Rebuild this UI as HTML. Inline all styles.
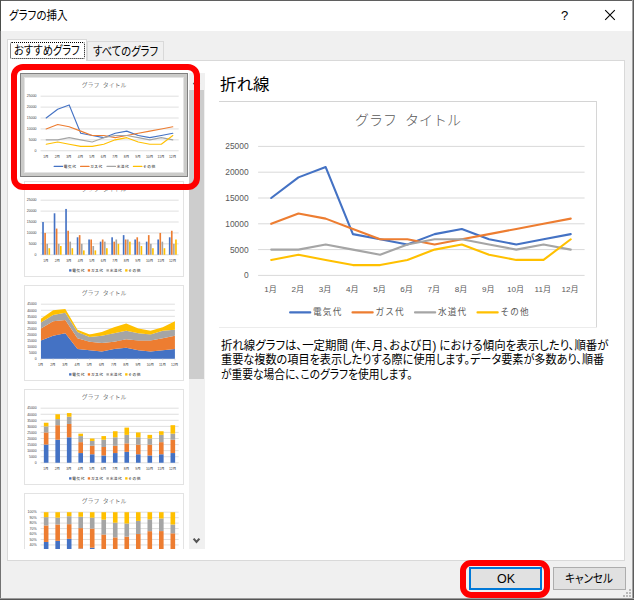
<!DOCTYPE html>
<html lang="ja">
<head>
<meta charset="utf-8">
<title>グラフの挿入</title>
<style>
html,body{margin:0;padding:0;}
body{width:634px;height:600px;overflow:hidden;background:#f0f0f0;position:relative;
 font-family:"Liberation Sans","Noto Sans CJK JP",sans-serif;font-size:12px;color:#000;}
.abs{position:absolute;}
.t{position:absolute;white-space:nowrap;transform-origin:0 0;line-height:1;font-family:"Liberation Sans","Noto Sans CJK JP",sans-serif;font-feature-settings:"palt";}
.ch{position:absolute;display:block;}
#titlebar{left:0;top:0;width:634px;height:31px;background:#fff;}
#bt{left:0;top:0;width:634px;height:1px;background:#5f5f5f;}
#bl{left:0;top:0;width:1px;height:600px;background:linear-gradient(#4a4d4a 0,#4a4d4a 31px,#727272 31px,#727272 100%);}
#br{left:632px;top:0;width:1px;height:600px;background:#5c5c5c;border-left:1px solid #a2a2a2;}
#bb{left:0;top:599px;width:634px;height:1px;background:#555;border-top:1px solid #9a9a9a;margin-top:-1px;}
#panel{left:7px;top:60px;width:616px;height:499px;background:#fff;border:1px solid #d9d9d9;}
#tab1{left:7px;top:39px;width:80px;height:22px;background:#fff;border:1px solid #d9d9d9;border-bottom:none;box-sizing:border-box;}
#tab1f{left:10px;top:42px;width:75px;height:17px;border:1px dotted #000;box-sizing:border-box;border-radius:2px;}
#tab2{left:87px;top:41px;width:77px;height:19px;background:#f0f0f0;border:1px solid #d9d9d9;border-bottom:none;box-sizing:border-box;}
#list{left:20px;top:73px;width:185px;height:476px;overflow:hidden;background:#fff;}
.th{position:absolute;left:4px;width:158px;height:94px;border:1px solid #e3e3e3;background:#fff;overflow:hidden;}
.th svg{left:-1px;top:-1px;}
#sel{left:0;top:0;width:168px;height:104px;box-sizing:border-box;border:1px solid #808080;background:#cbcbc9;}
#sb{left:169px;top:0;width:16px;height:476px;background:#f0f0f0;}
#sbt{left:169px;top:17px;width:15px;height:289px;background:#cdcdcd;}
#sep{left:219px;top:101px;width:378px;height:1px;background:#e1e1e1;}
.btn{position:absolute;box-sizing:border-box;background:#e1e1e1;}
#ok{left:469px;top:567px;width:73px;height:23px;border:2px solid #0078d7;}
#cancel{left:553px;top:567px;width:73px;height:23px;border:1px solid #adadad;}
.red{position:absolute;box-sizing:border-box;border:6px solid #ff0000;}
#red1{left:11px;top:64px;width:189px;height:126px;border-radius:12px;}
#red2{left:460px;top:560px;width:90px;height:38px;border-radius:11px;}
</style>
</head>
<body>
<div class="abs" id="titlebar"></div>
<div class="t" id="ttl" style="transform:scaleX(0.875);left:9px;top:10px;font-size:12px;">グラフの挿入</div>
<div class="t" id="help" style="left:561px;top:9px;font-size:13px;font-family:'Liberation Sans',sans-serif;">?</div>
<svg class="ch" style="left:604px;top:9px" width="12" height="12" viewBox="0 0 12 12"><path d="M1.2 1.2 L10.8 10.8 M10.8 1.2 L1.2 10.8" stroke="#000" stroke-width="1.1" fill="none"/></svg>
<div class="abs" id="tab2"></div>
<div class="abs" id="panel"></div>
<div class="abs" id="tab1"></div>
<div class="abs" id="tab1f"></div>
<div class="t" id="tab1t" style="transform:scaleX(0.86);left:14px;top:45px;font-size:12px;">おすすめグラフ</div>
<div class="t" id="tab2t" style="transform:scaleX(0.86);left:93px;top:46px;font-size:12px;">すべてのグラフ</div>

<div class="abs" id="list">
<div class="abs" id="sel"></div>
<div class="th" style="top:4px">
<svg class="ch" style="left:-1px;top:-1px" width="160" height="96" viewBox="0 0 378 227" font-family='Liberation Sans, Noto Sans CJK JP, sans-serif' >
<rect x="0" y="0" width="378" height="227" fill="#fff"/>
<text x="189" y="24.3" font-size="14" font-weight="300" word-spacing="4" text-anchor="middle" fill="#2e2e2e">グラフ タイトル</text>
<line x1="39.1" x2="365.6" y1="174.4" y2="174.4" stroke="#D9D9D9" stroke-width="2.0"/>
<text x="29.6" y="177.4" font-size="8.4" font-weight="500" text-anchor="end" fill="#3c3c3c">0</text>
<line x1="39.1" x2="365.6" y1="148.6" y2="148.6" stroke="#D9D9D9" stroke-width="2.0"/>
<text x="29.6" y="151.6" font-size="8.4" font-weight="500" text-anchor="end" fill="#3c3c3c">5000</text>
<line x1="39.1" x2="365.6" y1="122.8" y2="122.8" stroke="#D9D9D9" stroke-width="2.0"/>
<text x="29.6" y="125.8" font-size="8.4" font-weight="500" text-anchor="end" fill="#3c3c3c">10000</text>
<line x1="39.1" x2="365.6" y1="97" y2="97" stroke="#D9D9D9" stroke-width="2.0"/>
<text x="29.6" y="100" font-size="8.4" font-weight="500" text-anchor="end" fill="#3c3c3c">15000</text>
<line x1="39.1" x2="365.6" y1="71.2" y2="71.2" stroke="#D9D9D9" stroke-width="2.0"/>
<text x="29.6" y="74.2" font-size="8.4" font-weight="500" text-anchor="end" fill="#3c3c3c">20000</text>
<line x1="39.1" x2="365.6" y1="45.4" y2="45.4" stroke="#D9D9D9" stroke-width="2.0"/>
<text x="29.6" y="48.4" font-size="8.4" font-weight="500" text-anchor="end" fill="#3c3c3c">25000</text>
<text x="51.52" y="191.2" font-size="8.1" font-weight="500" text-anchor="middle" fill="#3c3c3c">1月</text>
<text x="78.74" y="191.2" font-size="8.1" font-weight="500" text-anchor="middle" fill="#3c3c3c">2月</text>
<text x="105.98" y="191.2" font-size="8.1" font-weight="500" text-anchor="middle" fill="#3c3c3c">3月</text>
<text x="133.21" y="191.2" font-size="8.1" font-weight="500" text-anchor="middle" fill="#3c3c3c">4月</text>
<text x="160.44" y="191.2" font-size="8.1" font-weight="500" text-anchor="middle" fill="#3c3c3c">5月</text>
<text x="187.67" y="191.2" font-size="8.1" font-weight="500" text-anchor="middle" fill="#3c3c3c">6月</text>
<text x="214.9" y="191.2" font-size="8.1" font-weight="500" text-anchor="middle" fill="#3c3c3c">7月</text>
<text x="242.12" y="191.2" font-size="8.1" font-weight="500" text-anchor="middle" fill="#3c3c3c">8月</text>
<text x="269.36" y="191.2" font-size="8.1" font-weight="500" text-anchor="middle" fill="#3c3c3c">9月</text>
<text x="296.59" y="191.2" font-size="8.1" font-weight="500" text-anchor="middle" fill="#3c3c3c">10月</text>
<text x="323.82" y="191.2" font-size="8.1" font-weight="500" text-anchor="middle" fill="#3c3c3c">11月</text>
<text x="351.05" y="191.2" font-size="8.1" font-weight="500" text-anchor="middle" fill="#3c3c3c">12月</text>
<polyline points="52.22,97 79.44,76.36 106.68,66.04 133.91,133.12 161.13,138.28 188.37,143.44 215.59,133.12 242.82,127.96 270.06,138.28 297.29,143.44 324.52,138.28 351.75,133.12" fill="none" stroke="#4472C4" stroke-width="2.6" stroke-linejoin="round" stroke-linecap="round"/>
<polyline points="52.22,122.8 79.44,112.48 106.68,117.64 133.91,127.96 161.13,138.28 188.37,138.28 215.59,143.44 242.82,138.28 270.06,133.12 297.29,127.96 324.52,122.8 351.75,117.64" fill="none" stroke="#ED7D31" stroke-width="2.6" stroke-linejoin="round" stroke-linecap="round"/>
<polyline points="52.22,148.6 79.44,148.6 106.68,143.44 133.91,148.6 161.13,153.76 188.37,143.44 215.59,138.28 242.82,138.28 270.06,143.44 297.29,148.6 324.52,143.44 351.75,148.6" fill="none" stroke="#A5A5A5" stroke-width="2.6" stroke-linejoin="round" stroke-linecap="round"/>
<polyline points="52.22,158.92 79.44,153.76 106.68,158.92 133.91,164.08 161.13,164.08 188.37,158.92 215.59,148.6 242.82,143.44 270.06,153.76 297.29,158.92 324.52,158.92 351.75,138.28" fill="none" stroke="#FFC000" stroke-width="2.6" stroke-linejoin="round" stroke-linecap="round"/>
<line x1="71.1" x2="91.3" y1="211.4" y2="211.4" stroke="#4472C4" stroke-width="2.6" stroke-linecap="round"/>
<text x="94.0" y="214.4" font-size="8.6" letter-spacing="1.25" font-weight="500" fill="#3c3c3c">電気代</text>
<line x1="133.5" x2="153.7" y1="211.4" y2="211.4" stroke="#ED7D31" stroke-width="2.6" stroke-linecap="round"/>
<text x="156.4" y="214.4" font-size="8.6" letter-spacing="1.25" font-weight="500" fill="#3c3c3c">ガス代</text>
<line x1="196" x2="216.2" y1="211.4" y2="211.4" stroke="#A5A5A5" stroke-width="2.6" stroke-linecap="round"/>
<text x="218.9" y="214.4" font-size="8.6" letter-spacing="1.25" font-weight="500" fill="#3c3c3c">水道代</text>
<line x1="258.5" x2="278.7" y1="211.4" y2="211.4" stroke="#FFC000" stroke-width="2.6" stroke-linecap="round"/>
<text x="281.4" y="214.4" font-size="8.6" letter-spacing="1.25" font-weight="500" fill="#3c3c3c">その他</text>
</svg>
</div>
<div class="th" style="top:108px">
<svg class="ch" style="left:-1px;top:-1px" width="160" height="96" viewBox="0 0 378 227" font-family='Liberation Sans, Noto Sans CJK JP, sans-serif' >
<rect x="0" y="0" width="378" height="227" fill="#fff"/>
<text x="189" y="24.3" font-size="14" font-weight="300" word-spacing="4" text-anchor="middle" fill="#2e2e2e">グラフ タイトル</text>
<line x1="39.1" x2="365.6" y1="174.4" y2="174.4" stroke="#D9D9D9" stroke-width="2.0"/>
<text x="29.6" y="177.4" font-size="8.4" font-weight="500" text-anchor="end" fill="#3c3c3c">0</text>
<line x1="39.1" x2="365.6" y1="148.6" y2="148.6" stroke="#D9D9D9" stroke-width="2.0"/>
<text x="29.6" y="151.6" font-size="8.4" font-weight="500" text-anchor="end" fill="#3c3c3c">5000</text>
<line x1="39.1" x2="365.6" y1="122.8" y2="122.8" stroke="#D9D9D9" stroke-width="2.0"/>
<text x="29.6" y="125.8" font-size="8.4" font-weight="500" text-anchor="end" fill="#3c3c3c">10000</text>
<line x1="39.1" x2="365.6" y1="97" y2="97" stroke="#D9D9D9" stroke-width="2.0"/>
<text x="29.6" y="100" font-size="8.4" font-weight="500" text-anchor="end" fill="#3c3c3c">15000</text>
<line x1="39.1" x2="365.6" y1="71.2" y2="71.2" stroke="#D9D9D9" stroke-width="2.0"/>
<text x="29.6" y="74.2" font-size="8.4" font-weight="500" text-anchor="end" fill="#3c3c3c">20000</text>
<line x1="39.1" x2="365.6" y1="45.4" y2="45.4" stroke="#D9D9D9" stroke-width="2.0"/>
<text x="29.6" y="48.4" font-size="8.4" font-weight="500" text-anchor="end" fill="#3c3c3c">25000</text>
<text x="51.52" y="191.2" font-size="8.1" font-weight="500" text-anchor="middle" fill="#3c3c3c">1月</text>
<text x="78.74" y="191.2" font-size="8.1" font-weight="500" text-anchor="middle" fill="#3c3c3c">2月</text>
<text x="105.98" y="191.2" font-size="8.1" font-weight="500" text-anchor="middle" fill="#3c3c3c">3月</text>
<text x="133.21" y="191.2" font-size="8.1" font-weight="500" text-anchor="middle" fill="#3c3c3c">4月</text>
<text x="160.44" y="191.2" font-size="8.1" font-weight="500" text-anchor="middle" fill="#3c3c3c">5月</text>
<text x="187.67" y="191.2" font-size="8.1" font-weight="500" text-anchor="middle" fill="#3c3c3c">6月</text>
<text x="214.9" y="191.2" font-size="8.1" font-weight="500" text-anchor="middle" fill="#3c3c3c">7月</text>
<text x="242.12" y="191.2" font-size="8.1" font-weight="500" text-anchor="middle" fill="#3c3c3c">8月</text>
<text x="269.36" y="191.2" font-size="8.1" font-weight="500" text-anchor="middle" fill="#3c3c3c">9月</text>
<text x="296.59" y="191.2" font-size="8.1" font-weight="500" text-anchor="middle" fill="#3c3c3c">10月</text>
<text x="323.82" y="191.2" font-size="8.1" font-weight="500" text-anchor="middle" fill="#3c3c3c">11月</text>
<text x="351.05" y="191.2" font-size="8.1" font-weight="500" text-anchor="middle" fill="#3c3c3c">12月</text>
<rect x="42.86" y="97" width="3.89" height="77.4" fill="#4472C4"/>
<rect x="47.8" y="122.8" width="3.89" height="51.6" fill="#ED7D31"/>
<rect x="52.74" y="148.6" width="3.89" height="25.8" fill="#A5A5A5"/>
<rect x="57.68" y="158.92" width="3.89" height="15.48" fill="#FFC000"/>
<rect x="70.09" y="76.36" width="3.89" height="98.04" fill="#4472C4"/>
<rect x="75.03" y="112.48" width="3.89" height="61.92" fill="#ED7D31"/>
<rect x="79.97" y="148.6" width="3.89" height="25.8" fill="#A5A5A5"/>
<rect x="84.91" y="153.76" width="3.89" height="20.64" fill="#FFC000"/>
<rect x="97.32" y="66.04" width="3.89" height="108.36" fill="#4472C4"/>
<rect x="102.26" y="117.64" width="3.89" height="56.76" fill="#ED7D31"/>
<rect x="107.2" y="143.44" width="3.89" height="30.96" fill="#A5A5A5"/>
<rect x="112.14" y="158.92" width="3.89" height="15.48" fill="#FFC000"/>
<rect x="124.55" y="133.12" width="3.89" height="41.28" fill="#4472C4"/>
<rect x="129.49" y="127.96" width="3.89" height="46.44" fill="#ED7D31"/>
<rect x="134.43" y="148.6" width="3.89" height="25.8" fill="#A5A5A5"/>
<rect x="139.37" y="164.08" width="3.89" height="10.32" fill="#FFC000"/>
<rect x="151.78" y="138.28" width="3.89" height="36.12" fill="#4472C4"/>
<rect x="156.72" y="138.28" width="3.89" height="36.12" fill="#ED7D31"/>
<rect x="161.66" y="153.76" width="3.89" height="20.64" fill="#A5A5A5"/>
<rect x="166.6" y="164.08" width="3.89" height="10.32" fill="#FFC000"/>
<rect x="179.01" y="143.44" width="3.89" height="30.96" fill="#4472C4"/>
<rect x="183.95" y="138.28" width="3.89" height="36.12" fill="#ED7D31"/>
<rect x="188.89" y="143.44" width="3.89" height="30.96" fill="#A5A5A5"/>
<rect x="193.83" y="158.92" width="3.89" height="15.48" fill="#FFC000"/>
<rect x="206.24" y="133.12" width="3.89" height="41.28" fill="#4472C4"/>
<rect x="211.18" y="143.44" width="3.89" height="30.96" fill="#ED7D31"/>
<rect x="216.12" y="138.28" width="3.89" height="36.12" fill="#A5A5A5"/>
<rect x="221.06" y="148.6" width="3.89" height="25.8" fill="#FFC000"/>
<rect x="233.47" y="127.96" width="3.89" height="46.44" fill="#4472C4"/>
<rect x="238.41" y="138.28" width="3.89" height="36.12" fill="#ED7D31"/>
<rect x="243.35" y="138.28" width="3.89" height="36.12" fill="#A5A5A5"/>
<rect x="248.29" y="143.44" width="3.89" height="30.96" fill="#FFC000"/>
<rect x="260.7" y="138.28" width="3.89" height="36.12" fill="#4472C4"/>
<rect x="265.64" y="133.12" width="3.89" height="41.28" fill="#ED7D31"/>
<rect x="270.58" y="143.44" width="3.89" height="30.96" fill="#A5A5A5"/>
<rect x="275.52" y="153.76" width="3.89" height="20.64" fill="#FFC000"/>
<rect x="287.93" y="143.44" width="3.89" height="30.96" fill="#4472C4"/>
<rect x="292.87" y="127.96" width="3.89" height="46.44" fill="#ED7D31"/>
<rect x="297.81" y="148.6" width="3.89" height="25.8" fill="#A5A5A5"/>
<rect x="302.75" y="158.92" width="3.89" height="15.48" fill="#FFC000"/>
<rect x="315.16" y="138.28" width="3.89" height="36.12" fill="#4472C4"/>
<rect x="320.1" y="122.8" width="3.89" height="51.6" fill="#ED7D31"/>
<rect x="325.04" y="143.44" width="3.89" height="30.96" fill="#A5A5A5"/>
<rect x="329.98" y="158.92" width="3.89" height="15.48" fill="#FFC000"/>
<rect x="342.39" y="133.12" width="3.89" height="41.28" fill="#4472C4"/>
<rect x="347.33" y="117.64" width="3.89" height="56.76" fill="#ED7D31"/>
<rect x="352.27" y="148.6" width="3.89" height="25.8" fill="#A5A5A5"/>
<rect x="357.21" y="138.28" width="3.89" height="36.12" fill="#FFC000"/>
<rect x="106.5" y="208.6" width="5.6" height="5.6" fill="#4472C4"/>
<text x="114.1" y="214.4" font-size="8.6" letter-spacing="1.25" font-weight="500" fill="#3c3c3c">電気代</text>
<rect x="150.6" y="208.6" width="5.6" height="5.6" fill="#ED7D31"/>
<text x="158.2" y="214.4" font-size="8.6" letter-spacing="1.25" font-weight="500" fill="#3c3c3c">ガス代</text>
<rect x="194.8" y="208.6" width="5.6" height="5.6" fill="#A5A5A5"/>
<text x="202.4" y="214.4" font-size="8.6" letter-spacing="1.25" font-weight="500" fill="#3c3c3c">水道代</text>
<rect x="239" y="208.6" width="5.6" height="5.6" fill="#FFC000"/>
<text x="246.6" y="214.4" font-size="8.6" letter-spacing="1.25" font-weight="500" fill="#3c3c3c">その他</text>
</svg>
</div>
<div class="th" style="top:212px">
<svg class="ch" style="left:-1px;top:-1px" width="160" height="96" viewBox="0 0 378 227" font-family='Liberation Sans, Noto Sans CJK JP, sans-serif' >
<rect x="0" y="0" width="378" height="227" fill="#fff"/>
<text x="189" y="24.3" font-size="14" font-weight="300" word-spacing="4" text-anchor="middle" fill="#2e2e2e">グラフ タイトル</text>
<line x1="39.9" x2="356.7" y1="174.4" y2="174.4" stroke="#D9D9D9" stroke-width="2.0"/>
<text x="29.6" y="177.4" font-size="8.0" font-weight="500" text-anchor="end" fill="#3c3c3c">0</text>
<line x1="39.9" x2="356.7" y1="160.07" y2="160.07" stroke="#D9D9D9" stroke-width="2.0"/>
<text x="29.6" y="163.07" font-size="8.0" font-weight="500" text-anchor="end" fill="#3c3c3c">5000</text>
<line x1="39.9" x2="356.7" y1="145.73" y2="145.73" stroke="#D9D9D9" stroke-width="2.0"/>
<text x="29.6" y="148.73" font-size="8.0" font-weight="500" text-anchor="end" fill="#3c3c3c">10000</text>
<line x1="39.9" x2="356.7" y1="131.4" y2="131.4" stroke="#D9D9D9" stroke-width="2.0"/>
<text x="29.6" y="134.4" font-size="8.0" font-weight="500" text-anchor="end" fill="#3c3c3c">15000</text>
<line x1="39.9" x2="356.7" y1="117.07" y2="117.07" stroke="#D9D9D9" stroke-width="2.0"/>
<text x="29.6" y="120.07" font-size="8.0" font-weight="500" text-anchor="end" fill="#3c3c3c">20000</text>
<line x1="39.9" x2="356.7" y1="102.73" y2="102.73" stroke="#D9D9D9" stroke-width="2.0"/>
<text x="29.6" y="105.73" font-size="8.0" font-weight="500" text-anchor="end" fill="#3c3c3c">25000</text>
<line x1="39.9" x2="356.7" y1="88.4" y2="88.4" stroke="#D9D9D9" stroke-width="2.0"/>
<text x="29.6" y="91.4" font-size="8.0" font-weight="500" text-anchor="end" fill="#3c3c3c">30000</text>
<line x1="39.9" x2="356.7" y1="74.07" y2="74.07" stroke="#D9D9D9" stroke-width="2.0"/>
<text x="29.6" y="77.07" font-size="8.0" font-weight="500" text-anchor="end" fill="#3c3c3c">35000</text>
<line x1="39.9" x2="356.7" y1="59.73" y2="59.73" stroke="#D9D9D9" stroke-width="2.0"/>
<text x="29.6" y="62.73" font-size="8.0" font-weight="500" text-anchor="end" fill="#3c3c3c">40000</text>
<line x1="39.9" x2="356.7" y1="45.4" y2="45.4" stroke="#D9D9D9" stroke-width="2.0"/>
<text x="29.6" y="48.4" font-size="8.0" font-weight="500" text-anchor="end" fill="#3c3c3c">45000</text>
<text x="39.2" y="191.2" font-size="8.1" font-weight="500" text-anchor="middle" fill="#3c3c3c">1月</text>
<text x="68" y="191.2" font-size="8.1" font-weight="500" text-anchor="middle" fill="#3c3c3c">2月</text>
<text x="96.8" y="191.2" font-size="8.1" font-weight="500" text-anchor="middle" fill="#3c3c3c">3月</text>
<text x="125.6" y="191.2" font-size="8.1" font-weight="500" text-anchor="middle" fill="#3c3c3c">4月</text>
<text x="154.4" y="191.2" font-size="8.1" font-weight="500" text-anchor="middle" fill="#3c3c3c">5月</text>
<text x="183.2" y="191.2" font-size="8.1" font-weight="500" text-anchor="middle" fill="#3c3c3c">6月</text>
<text x="212" y="191.2" font-size="8.1" font-weight="500" text-anchor="middle" fill="#3c3c3c">7月</text>
<text x="240.8" y="191.2" font-size="8.1" font-weight="500" text-anchor="middle" fill="#3c3c3c">8月</text>
<text x="269.6" y="191.2" font-size="8.1" font-weight="500" text-anchor="middle" fill="#3c3c3c">9月</text>
<text x="298.4" y="191.2" font-size="8.1" font-weight="500" text-anchor="middle" fill="#3c3c3c">10月</text>
<text x="327.2" y="191.2" font-size="8.1" font-weight="500" text-anchor="middle" fill="#3c3c3c">11月</text>
<text x="356" y="191.2" font-size="8.1" font-weight="500" text-anchor="middle" fill="#3c3c3c">12月</text>
<polygon points="39.9,131.4 68.7,119.93 97.5,114.2 126.3,151.47 155.1,154.33 183.9,157.2 212.7,151.47 241.5,148.6 270.3,154.33 299.1,157.2 327.9,154.33 356.7,151.47 356.7,174.4 327.9,174.4 299.1,174.4 270.3,174.4 241.5,174.4 212.7,174.4 183.9,174.4 155.1,174.4 126.3,174.4 97.5,174.4 68.7,174.4 39.9,174.4" fill="#4472C4"/>
<polygon points="39.9,102.73 68.7,85.53 97.5,82.67 126.3,125.67 155.1,134.27 183.9,137.13 212.7,134.27 241.5,128.53 270.3,131.4 299.1,131.4 327.9,125.67 356.7,119.93 356.7,151.47 327.9,154.33 299.1,157.2 270.3,154.33 241.5,148.6 212.7,151.47 183.9,157.2 155.1,154.33 126.3,151.47 97.5,114.2 68.7,119.93 39.9,131.4" fill="#ED7D31"/>
<polygon points="39.9,88.4 68.7,71.2 97.5,65.47 126.3,111.33 155.1,122.8 183.9,119.93 212.7,114.2 241.5,108.47 270.3,114.2 299.1,117.07 327.9,108.47 356.7,105.6 356.7,119.93 327.9,125.67 299.1,131.4 270.3,131.4 241.5,128.53 212.7,134.27 183.9,137.13 155.1,134.27 126.3,125.67 97.5,82.67 68.7,85.53 39.9,102.73" fill="#A5A5A5"/>
<polygon points="39.9,79.8 68.7,59.73 97.5,56.87 126.3,105.6 155.1,117.07 183.9,111.33 212.7,99.87 241.5,91.27 270.3,102.73 299.1,108.47 327.9,99.87 356.7,85.53 356.7,105.6 327.9,108.47 299.1,117.07 270.3,114.2 241.5,108.47 212.7,114.2 183.9,119.93 155.1,122.8 126.3,111.33 97.5,65.47 68.7,71.2 39.9,88.4" fill="#FFC000"/>
<line x1="39.9" x2="39.9" y1="174.4" y2="177.9" stroke="#D9D9D9" stroke-width="2.0"/>
<line x1="68.7" x2="68.7" y1="174.4" y2="177.9" stroke="#D9D9D9" stroke-width="2.0"/>
<line x1="97.5" x2="97.5" y1="174.4" y2="177.9" stroke="#D9D9D9" stroke-width="2.0"/>
<line x1="126.3" x2="126.3" y1="174.4" y2="177.9" stroke="#D9D9D9" stroke-width="2.0"/>
<line x1="155.1" x2="155.1" y1="174.4" y2="177.9" stroke="#D9D9D9" stroke-width="2.0"/>
<line x1="183.9" x2="183.9" y1="174.4" y2="177.9" stroke="#D9D9D9" stroke-width="2.0"/>
<line x1="212.7" x2="212.7" y1="174.4" y2="177.9" stroke="#D9D9D9" stroke-width="2.0"/>
<line x1="241.5" x2="241.5" y1="174.4" y2="177.9" stroke="#D9D9D9" stroke-width="2.0"/>
<line x1="270.3" x2="270.3" y1="174.4" y2="177.9" stroke="#D9D9D9" stroke-width="2.0"/>
<line x1="299.1" x2="299.1" y1="174.4" y2="177.9" stroke="#D9D9D9" stroke-width="2.0"/>
<line x1="327.9" x2="327.9" y1="174.4" y2="177.9" stroke="#D9D9D9" stroke-width="2.0"/>
<line x1="356.7" x2="356.7" y1="174.4" y2="177.9" stroke="#D9D9D9" stroke-width="2.0"/>
<rect x="106.5" y="208.6" width="5.6" height="5.6" fill="#4472C4"/>
<text x="114.1" y="214.4" font-size="8.6" letter-spacing="1.25" font-weight="500" fill="#3c3c3c">電気代</text>
<rect x="150.6" y="208.6" width="5.6" height="5.6" fill="#ED7D31"/>
<text x="158.2" y="214.4" font-size="8.6" letter-spacing="1.25" font-weight="500" fill="#3c3c3c">ガス代</text>
<rect x="194.8" y="208.6" width="5.6" height="5.6" fill="#A5A5A5"/>
<text x="202.4" y="214.4" font-size="8.6" letter-spacing="1.25" font-weight="500" fill="#3c3c3c">水道代</text>
<rect x="239" y="208.6" width="5.6" height="5.6" fill="#FFC000"/>
<text x="246.6" y="214.4" font-size="8.6" letter-spacing="1.25" font-weight="500" fill="#3c3c3c">その他</text>
</svg>
</div>
<div class="th" style="top:316px">
<svg class="ch" style="left:-1px;top:-1px" width="160" height="96" viewBox="0 0 378 227" font-family='Liberation Sans, Noto Sans CJK JP, sans-serif' >
<rect x="0" y="0" width="378" height="227" fill="#fff"/>
<text x="189" y="24.3" font-size="14" font-weight="300" word-spacing="4" text-anchor="middle" fill="#2e2e2e">グラフ タイトル</text>
<line x1="39.1" x2="365.6" y1="174.4" y2="174.4" stroke="#D9D9D9" stroke-width="2.0"/>
<text x="29.6" y="177.4" font-size="8.0" font-weight="500" text-anchor="end" fill="#3c3c3c">0</text>
<line x1="39.1" x2="365.6" y1="160.07" y2="160.07" stroke="#D9D9D9" stroke-width="2.0"/>
<text x="29.6" y="163.07" font-size="8.0" font-weight="500" text-anchor="end" fill="#3c3c3c">5000</text>
<line x1="39.1" x2="365.6" y1="145.73" y2="145.73" stroke="#D9D9D9" stroke-width="2.0"/>
<text x="29.6" y="148.73" font-size="8.0" font-weight="500" text-anchor="end" fill="#3c3c3c">10000</text>
<line x1="39.1" x2="365.6" y1="131.4" y2="131.4" stroke="#D9D9D9" stroke-width="2.0"/>
<text x="29.6" y="134.4" font-size="8.0" font-weight="500" text-anchor="end" fill="#3c3c3c">15000</text>
<line x1="39.1" x2="365.6" y1="117.07" y2="117.07" stroke="#D9D9D9" stroke-width="2.0"/>
<text x="29.6" y="120.07" font-size="8.0" font-weight="500" text-anchor="end" fill="#3c3c3c">20000</text>
<line x1="39.1" x2="365.6" y1="102.73" y2="102.73" stroke="#D9D9D9" stroke-width="2.0"/>
<text x="29.6" y="105.73" font-size="8.0" font-weight="500" text-anchor="end" fill="#3c3c3c">25000</text>
<line x1="39.1" x2="365.6" y1="88.4" y2="88.4" stroke="#D9D9D9" stroke-width="2.0"/>
<text x="29.6" y="91.4" font-size="8.0" font-weight="500" text-anchor="end" fill="#3c3c3c">30000</text>
<line x1="39.1" x2="365.6" y1="74.07" y2="74.07" stroke="#D9D9D9" stroke-width="2.0"/>
<text x="29.6" y="77.07" font-size="8.0" font-weight="500" text-anchor="end" fill="#3c3c3c">35000</text>
<line x1="39.1" x2="365.6" y1="59.73" y2="59.73" stroke="#D9D9D9" stroke-width="2.0"/>
<text x="29.6" y="62.73" font-size="8.0" font-weight="500" text-anchor="end" fill="#3c3c3c">40000</text>
<line x1="39.1" x2="365.6" y1="45.4" y2="45.4" stroke="#D9D9D9" stroke-width="2.0"/>
<text x="29.6" y="48.4" font-size="8.0" font-weight="500" text-anchor="end" fill="#3c3c3c">45000</text>
<text x="51.52" y="191.2" font-size="8.1" font-weight="500" text-anchor="middle" fill="#3c3c3c">1月</text>
<text x="78.74" y="191.2" font-size="8.1" font-weight="500" text-anchor="middle" fill="#3c3c3c">2月</text>
<text x="105.98" y="191.2" font-size="8.1" font-weight="500" text-anchor="middle" fill="#3c3c3c">3月</text>
<text x="133.21" y="191.2" font-size="8.1" font-weight="500" text-anchor="middle" fill="#3c3c3c">4月</text>
<text x="160.44" y="191.2" font-size="8.1" font-weight="500" text-anchor="middle" fill="#3c3c3c">5月</text>
<text x="187.67" y="191.2" font-size="8.1" font-weight="500" text-anchor="middle" fill="#3c3c3c">6月</text>
<text x="214.9" y="191.2" font-size="8.1" font-weight="500" text-anchor="middle" fill="#3c3c3c">7月</text>
<text x="242.12" y="191.2" font-size="8.1" font-weight="500" text-anchor="middle" fill="#3c3c3c">8月</text>
<text x="269.36" y="191.2" font-size="8.1" font-weight="500" text-anchor="middle" fill="#3c3c3c">9月</text>
<text x="296.59" y="191.2" font-size="8.1" font-weight="500" text-anchor="middle" fill="#3c3c3c">10月</text>
<text x="323.82" y="191.2" font-size="8.1" font-weight="500" text-anchor="middle" fill="#3c3c3c">11月</text>
<text x="351.05" y="191.2" font-size="8.1" font-weight="500" text-anchor="middle" fill="#3c3c3c">12月</text>
<rect x="46.77" y="131.4" width="10.89" height="43" fill="#4472C4"/>
<rect x="46.77" y="102.73" width="10.89" height="28.67" fill="#ED7D31"/>
<rect x="46.77" y="88.4" width="10.89" height="14.33" fill="#A5A5A5"/>
<rect x="46.77" y="79.8" width="10.89" height="8.6" fill="#FFC000"/>
<rect x="74" y="119.93" width="10.89" height="54.47" fill="#4472C4"/>
<rect x="74" y="85.53" width="10.89" height="34.4" fill="#ED7D31"/>
<rect x="74" y="71.2" width="10.89" height="14.33" fill="#A5A5A5"/>
<rect x="74" y="59.73" width="10.89" height="11.47" fill="#FFC000"/>
<rect x="101.23" y="114.2" width="10.89" height="60.2" fill="#4472C4"/>
<rect x="101.23" y="82.67" width="10.89" height="31.53" fill="#ED7D31"/>
<rect x="101.23" y="65.47" width="10.89" height="17.2" fill="#A5A5A5"/>
<rect x="101.23" y="56.87" width="10.89" height="8.6" fill="#FFC000"/>
<rect x="128.46" y="151.47" width="10.89" height="22.93" fill="#4472C4"/>
<rect x="128.46" y="125.67" width="10.89" height="25.8" fill="#ED7D31"/>
<rect x="128.46" y="111.33" width="10.89" height="14.33" fill="#A5A5A5"/>
<rect x="128.46" y="105.6" width="10.89" height="5.73" fill="#FFC000"/>
<rect x="155.69" y="154.33" width="10.89" height="20.07" fill="#4472C4"/>
<rect x="155.69" y="134.27" width="10.89" height="20.07" fill="#ED7D31"/>
<rect x="155.69" y="122.8" width="10.89" height="11.47" fill="#A5A5A5"/>
<rect x="155.69" y="117.07" width="10.89" height="5.73" fill="#FFC000"/>
<rect x="182.92" y="157.2" width="10.89" height="17.2" fill="#4472C4"/>
<rect x="182.92" y="137.13" width="10.89" height="20.07" fill="#ED7D31"/>
<rect x="182.92" y="119.93" width="10.89" height="17.2" fill="#A5A5A5"/>
<rect x="182.92" y="111.33" width="10.89" height="8.6" fill="#FFC000"/>
<rect x="210.15" y="151.47" width="10.89" height="22.93" fill="#4472C4"/>
<rect x="210.15" y="134.27" width="10.89" height="17.2" fill="#ED7D31"/>
<rect x="210.15" y="114.2" width="10.89" height="20.07" fill="#A5A5A5"/>
<rect x="210.15" y="99.87" width="10.89" height="14.33" fill="#FFC000"/>
<rect x="237.38" y="148.6" width="10.89" height="25.8" fill="#4472C4"/>
<rect x="237.38" y="128.53" width="10.89" height="20.07" fill="#ED7D31"/>
<rect x="237.38" y="108.47" width="10.89" height="20.07" fill="#A5A5A5"/>
<rect x="237.38" y="91.27" width="10.89" height="17.2" fill="#FFC000"/>
<rect x="264.61" y="154.33" width="10.89" height="20.07" fill="#4472C4"/>
<rect x="264.61" y="131.4" width="10.89" height="22.93" fill="#ED7D31"/>
<rect x="264.61" y="114.2" width="10.89" height="17.2" fill="#A5A5A5"/>
<rect x="264.61" y="102.73" width="10.89" height="11.47" fill="#FFC000"/>
<rect x="291.84" y="157.2" width="10.89" height="17.2" fill="#4472C4"/>
<rect x="291.84" y="131.4" width="10.89" height="25.8" fill="#ED7D31"/>
<rect x="291.84" y="117.07" width="10.89" height="14.33" fill="#A5A5A5"/>
<rect x="291.84" y="108.47" width="10.89" height="8.6" fill="#FFC000"/>
<rect x="319.07" y="154.33" width="10.89" height="20.07" fill="#4472C4"/>
<rect x="319.07" y="125.67" width="10.89" height="28.67" fill="#ED7D31"/>
<rect x="319.07" y="108.47" width="10.89" height="17.2" fill="#A5A5A5"/>
<rect x="319.07" y="99.87" width="10.89" height="8.6" fill="#FFC000"/>
<rect x="346.3" y="151.47" width="10.89" height="22.93" fill="#4472C4"/>
<rect x="346.3" y="119.93" width="10.89" height="31.53" fill="#ED7D31"/>
<rect x="346.3" y="105.6" width="10.89" height="14.33" fill="#A5A5A5"/>
<rect x="346.3" y="85.53" width="10.89" height="20.07" fill="#FFC000"/>
<rect x="106.5" y="208.6" width="5.6" height="5.6" fill="#4472C4"/>
<text x="114.1" y="214.4" font-size="8.6" letter-spacing="1.25" font-weight="500" fill="#3c3c3c">電気代</text>
<rect x="150.6" y="208.6" width="5.6" height="5.6" fill="#ED7D31"/>
<text x="158.2" y="214.4" font-size="8.6" letter-spacing="1.25" font-weight="500" fill="#3c3c3c">ガス代</text>
<rect x="194.8" y="208.6" width="5.6" height="5.6" fill="#A5A5A5"/>
<text x="202.4" y="214.4" font-size="8.6" letter-spacing="1.25" font-weight="500" fill="#3c3c3c">水道代</text>
<rect x="239" y="208.6" width="5.6" height="5.6" fill="#FFC000"/>
<text x="246.6" y="214.4" font-size="8.6" letter-spacing="1.25" font-weight="500" fill="#3c3c3c">その他</text>
</svg>
</div>
<div class="th" style="top:420px">
<svg class="ch" style="left:-1px;top:-1px" width="160" height="96" viewBox="0 0 378 227" font-family='Liberation Sans, Noto Sans CJK JP, sans-serif' >
<rect x="0" y="0" width="378" height="227" fill="#fff"/>
<text x="189" y="24.3" font-size="14" font-weight="300" word-spacing="4" text-anchor="middle" fill="#2e2e2e">グラフ タイトル</text>
<line x1="39.1" x2="365.6" y1="174.4" y2="174.4" stroke="#D9D9D9" stroke-width="2.0"/>
<text x="29.6" y="177.4" font-size="8.4" font-weight="500" text-anchor="end" fill="#3c3c3c">0%</text>
<line x1="39.1" x2="365.6" y1="161.5" y2="161.5" stroke="#D9D9D9" stroke-width="2.0"/>
<text x="29.6" y="164.5" font-size="8.4" font-weight="500" text-anchor="end" fill="#3c3c3c">10%</text>
<line x1="39.1" x2="365.6" y1="148.6" y2="148.6" stroke="#D9D9D9" stroke-width="2.0"/>
<text x="29.6" y="151.6" font-size="8.4" font-weight="500" text-anchor="end" fill="#3c3c3c">20%</text>
<line x1="39.1" x2="365.6" y1="135.7" y2="135.7" stroke="#D9D9D9" stroke-width="2.0"/>
<text x="29.6" y="138.7" font-size="8.4" font-weight="500" text-anchor="end" fill="#3c3c3c">30%</text>
<line x1="39.1" x2="365.6" y1="122.8" y2="122.8" stroke="#D9D9D9" stroke-width="2.0"/>
<text x="29.6" y="125.8" font-size="8.4" font-weight="500" text-anchor="end" fill="#3c3c3c">40%</text>
<line x1="39.1" x2="365.6" y1="109.9" y2="109.9" stroke="#D9D9D9" stroke-width="2.0"/>
<text x="29.6" y="112.9" font-size="8.4" font-weight="500" text-anchor="end" fill="#3c3c3c">50%</text>
<line x1="39.1" x2="365.6" y1="97" y2="97" stroke="#D9D9D9" stroke-width="2.0"/>
<text x="29.6" y="100" font-size="8.4" font-weight="500" text-anchor="end" fill="#3c3c3c">60%</text>
<line x1="39.1" x2="365.6" y1="84.1" y2="84.1" stroke="#D9D9D9" stroke-width="2.0"/>
<text x="29.6" y="87.1" font-size="8.4" font-weight="500" text-anchor="end" fill="#3c3c3c">70%</text>
<line x1="39.1" x2="365.6" y1="71.2" y2="71.2" stroke="#D9D9D9" stroke-width="2.0"/>
<text x="29.6" y="74.2" font-size="8.4" font-weight="500" text-anchor="end" fill="#3c3c3c">80%</text>
<line x1="39.1" x2="365.6" y1="58.3" y2="58.3" stroke="#D9D9D9" stroke-width="2.0"/>
<text x="29.6" y="61.3" font-size="8.4" font-weight="500" text-anchor="end" fill="#3c3c3c">90%</text>
<line x1="39.1" x2="365.6" y1="45.4" y2="45.4" stroke="#D9D9D9" stroke-width="2.0"/>
<text x="29.6" y="48.4" font-size="8.4" font-weight="500" text-anchor="end" fill="#3c3c3c">100%</text>
<text x="51.52" y="191.2" font-size="8.1" font-weight="500" text-anchor="middle" fill="#3c3c3c">1月</text>
<text x="78.74" y="191.2" font-size="8.1" font-weight="500" text-anchor="middle" fill="#3c3c3c">2月</text>
<text x="105.98" y="191.2" font-size="8.1" font-weight="500" text-anchor="middle" fill="#3c3c3c">3月</text>
<text x="133.21" y="191.2" font-size="8.1" font-weight="500" text-anchor="middle" fill="#3c3c3c">4月</text>
<text x="160.44" y="191.2" font-size="8.1" font-weight="500" text-anchor="middle" fill="#3c3c3c">5月</text>
<text x="187.67" y="191.2" font-size="8.1" font-weight="500" text-anchor="middle" fill="#3c3c3c">6月</text>
<text x="214.9" y="191.2" font-size="8.1" font-weight="500" text-anchor="middle" fill="#3c3c3c">7月</text>
<text x="242.12" y="191.2" font-size="8.1" font-weight="500" text-anchor="middle" fill="#3c3c3c">8月</text>
<text x="269.36" y="191.2" font-size="8.1" font-weight="500" text-anchor="middle" fill="#3c3c3c">9月</text>
<text x="296.59" y="191.2" font-size="8.1" font-weight="500" text-anchor="middle" fill="#3c3c3c">10月</text>
<text x="323.82" y="191.2" font-size="8.1" font-weight="500" text-anchor="middle" fill="#3c3c3c">11月</text>
<text x="351.05" y="191.2" font-size="8.1" font-weight="500" text-anchor="middle" fill="#3c3c3c">12月</text>
<rect x="46.77" y="115.76" width="10.89" height="58.64" fill="#4472C4"/>
<rect x="46.77" y="76.67" width="10.89" height="39.09" fill="#ED7D31"/>
<rect x="46.77" y="57.13" width="10.89" height="19.55" fill="#A5A5A5"/>
<rect x="46.77" y="45.4" width="10.89" height="11.73" fill="#FFC000"/>
<rect x="74" y="113.12" width="10.89" height="61.28" fill="#4472C4"/>
<rect x="74" y="74.43" width="10.89" height="38.7" fill="#ED7D31"/>
<rect x="74" y="58.3" width="10.89" height="16.12" fill="#A5A5A5"/>
<rect x="74" y="45.4" width="10.89" height="12.9" fill="#FFC000"/>
<rect x="101.23" y="108.33" width="10.89" height="66.07" fill="#4472C4"/>
<rect x="101.23" y="73.72" width="10.89" height="34.61" fill="#ED7D31"/>
<rect x="101.23" y="54.84" width="10.89" height="18.88" fill="#A5A5A5"/>
<rect x="101.23" y="45.4" width="10.89" height="9.44" fill="#FFC000"/>
<rect x="128.46" y="131.4" width="10.89" height="43" fill="#4472C4"/>
<rect x="128.46" y="83.02" width="10.89" height="48.38" fill="#ED7D31"/>
<rect x="128.46" y="56.15" width="10.89" height="26.87" fill="#A5A5A5"/>
<rect x="128.46" y="45.4" width="10.89" height="10.75" fill="#FFC000"/>
<rect x="155.69" y="129.25" width="10.89" height="45.15" fill="#4472C4"/>
<rect x="155.69" y="84.1" width="10.89" height="45.15" fill="#ED7D31"/>
<rect x="155.69" y="58.3" width="10.89" height="25.8" fill="#A5A5A5"/>
<rect x="155.69" y="45.4" width="10.89" height="12.9" fill="#FFC000"/>
<rect x="182.92" y="139.22" width="10.89" height="35.18" fill="#4472C4"/>
<rect x="182.92" y="98.17" width="10.89" height="41.05" fill="#ED7D31"/>
<rect x="182.92" y="62.99" width="10.89" height="35.18" fill="#A5A5A5"/>
<rect x="182.92" y="45.4" width="10.89" height="17.59" fill="#FFC000"/>
<rect x="210.15" y="134.71" width="10.89" height="39.69" fill="#4472C4"/>
<rect x="210.15" y="104.94" width="10.89" height="29.77" fill="#ED7D31"/>
<rect x="210.15" y="70.21" width="10.89" height="34.73" fill="#A5A5A5"/>
<rect x="210.15" y="45.4" width="10.89" height="24.81" fill="#FFC000"/>
<rect x="237.38" y="134.37" width="10.89" height="40.03" fill="#4472C4"/>
<rect x="237.38" y="103.23" width="10.89" height="31.14" fill="#ED7D31"/>
<rect x="237.38" y="72.09" width="10.89" height="31.14" fill="#A5A5A5"/>
<rect x="237.38" y="45.4" width="10.89" height="26.69" fill="#FFC000"/>
<rect x="264.61" y="138.28" width="10.89" height="36.12" fill="#4472C4"/>
<rect x="264.61" y="97" width="10.89" height="41.28" fill="#ED7D31"/>
<rect x="264.61" y="66.04" width="10.89" height="30.96" fill="#A5A5A5"/>
<rect x="264.61" y="45.4" width="10.89" height="20.64" fill="#FFC000"/>
<rect x="291.84" y="140.75" width="10.89" height="33.65" fill="#4472C4"/>
<rect x="291.84" y="90.27" width="10.89" height="50.48" fill="#ED7D31"/>
<rect x="291.84" y="62.23" width="10.89" height="28.04" fill="#A5A5A5"/>
<rect x="291.84" y="45.4" width="10.89" height="16.83" fill="#FFC000"/>
<rect x="319.07" y="139.67" width="10.89" height="34.73" fill="#4472C4"/>
<rect x="319.07" y="90.05" width="10.89" height="49.62" fill="#ED7D31"/>
<rect x="319.07" y="60.28" width="10.89" height="29.77" fill="#A5A5A5"/>
<rect x="319.07" y="45.4" width="10.89" height="14.88" fill="#FFC000"/>
<rect x="346.3" y="141.11" width="10.89" height="33.29" fill="#4472C4"/>
<rect x="346.3" y="95.34" width="10.89" height="45.77" fill="#ED7D31"/>
<rect x="346.3" y="74.53" width="10.89" height="20.81" fill="#A5A5A5"/>
<rect x="346.3" y="45.4" width="10.89" height="29.13" fill="#FFC000"/>
<rect x="106.5" y="208.6" width="5.6" height="5.6" fill="#4472C4"/>
<text x="114.1" y="214.4" font-size="8.6" letter-spacing="1.25" font-weight="500" fill="#3c3c3c">電気代</text>
<rect x="150.6" y="208.6" width="5.6" height="5.6" fill="#ED7D31"/>
<text x="158.2" y="214.4" font-size="8.6" letter-spacing="1.25" font-weight="500" fill="#3c3c3c">ガス代</text>
<rect x="194.8" y="208.6" width="5.6" height="5.6" fill="#A5A5A5"/>
<text x="202.4" y="214.4" font-size="8.6" letter-spacing="1.25" font-weight="500" fill="#3c3c3c">水道代</text>
<rect x="239" y="208.6" width="5.6" height="5.6" fill="#FFC000"/>
<text x="246.6" y="214.4" font-size="8.6" letter-spacing="1.25" font-weight="500" fill="#3c3c3c">その他</text>
</svg>
</div>
<div class="abs" id="sb"></div><div class="abs" id="sbt"></div>
<svg class="ch" style="left:172px;top:5px" width="10" height="9" viewBox="0 0 10 9"><path d="M1.6 6.4 L4.5 3 L7.4 6.4" stroke="#555" stroke-width="2.1" fill="none"/></svg>
<svg class="ch" style="left:172px;top:463px" width="10" height="9" viewBox="0 0 10 9"><path d="M1.6 2.6 L4.5 6 L7.4 2.6" stroke="#555" stroke-width="2.1" fill="none"/></svg>
</div>
<div class="t" id="head" style="transform:scaleX(1.03);left:220px;top:77px;font-size:16px;">折れ線</div>
<svg class="ch" style="left:219px;top:101px" width="378" height="227" viewBox="0 0 378 227" font-family='Liberation Sans, Noto Sans CJK JP, sans-serif' >
<rect x="0" y="0" width="378" height="227" fill="#fff"/>
<line x1="0" x2="378" y1="0.5" y2="0.5" stroke="#d4d4d4"/>
<line x1="377.5" x2="377.5" y1="0" y2="227" stroke="#d6d6d6"/>
<line x1="0" x2="378" y1="226.5" y2="226.5" stroke="#ececec"/>
<text x="189" y="24.3" font-size="14" font-weight="300" word-spacing="4" text-anchor="middle" fill="#595959">グラフ タイトル</text>
<line x1="39.1" x2="365.6" y1="174.4" y2="174.4" stroke="#D9D9D9" stroke-width="1"/>
<text x="29.6" y="177.4" font-size="8.4" font-weight="400" text-anchor="end" fill="#595959">0</text>
<line x1="39.1" x2="365.6" y1="148.6" y2="148.6" stroke="#D9D9D9" stroke-width="1"/>
<text x="29.6" y="151.6" font-size="8.4" font-weight="400" text-anchor="end" fill="#595959">5000</text>
<line x1="39.1" x2="365.6" y1="122.8" y2="122.8" stroke="#D9D9D9" stroke-width="1"/>
<text x="29.6" y="125.8" font-size="8.4" font-weight="400" text-anchor="end" fill="#595959">10000</text>
<line x1="39.1" x2="365.6" y1="97" y2="97" stroke="#D9D9D9" stroke-width="1"/>
<text x="29.6" y="100" font-size="8.4" font-weight="400" text-anchor="end" fill="#595959">15000</text>
<line x1="39.1" x2="365.6" y1="71.2" y2="71.2" stroke="#D9D9D9" stroke-width="1"/>
<text x="29.6" y="74.2" font-size="8.4" font-weight="400" text-anchor="end" fill="#595959">20000</text>
<line x1="39.1" x2="365.6" y1="45.4" y2="45.4" stroke="#D9D9D9" stroke-width="1"/>
<text x="29.6" y="48.4" font-size="8.4" font-weight="400" text-anchor="end" fill="#595959">25000</text>
<text x="51.52" y="191.2" font-size="8.1" font-weight="400" text-anchor="middle" fill="#595959">1月</text>
<text x="78.74" y="191.2" font-size="8.1" font-weight="400" text-anchor="middle" fill="#595959">2月</text>
<text x="105.98" y="191.2" font-size="8.1" font-weight="400" text-anchor="middle" fill="#595959">3月</text>
<text x="133.21" y="191.2" font-size="8.1" font-weight="400" text-anchor="middle" fill="#595959">4月</text>
<text x="160.44" y="191.2" font-size="8.1" font-weight="400" text-anchor="middle" fill="#595959">5月</text>
<text x="187.67" y="191.2" font-size="8.1" font-weight="400" text-anchor="middle" fill="#595959">6月</text>
<text x="214.9" y="191.2" font-size="8.1" font-weight="400" text-anchor="middle" fill="#595959">7月</text>
<text x="242.12" y="191.2" font-size="8.1" font-weight="400" text-anchor="middle" fill="#595959">8月</text>
<text x="269.36" y="191.2" font-size="8.1" font-weight="400" text-anchor="middle" fill="#595959">9月</text>
<text x="296.59" y="191.2" font-size="8.1" font-weight="400" text-anchor="middle" fill="#595959">10月</text>
<text x="323.82" y="191.2" font-size="8.1" font-weight="400" text-anchor="middle" fill="#595959">11月</text>
<text x="351.05" y="191.2" font-size="8.1" font-weight="400" text-anchor="middle" fill="#595959">12月</text>
<polyline points="52.22,97 79.44,76.36 106.68,66.04 133.91,133.12 161.13,138.28 188.37,143.44 215.59,133.12 242.82,127.96 270.06,138.28 297.29,143.44 324.52,138.28 351.75,133.12" fill="none" stroke="#4472C4" stroke-width="2.1" stroke-linejoin="round" stroke-linecap="round"/>
<polyline points="52.22,122.8 79.44,112.48 106.68,117.64 133.91,127.96 161.13,138.28 188.37,138.28 215.59,143.44 242.82,138.28 270.06,133.12 297.29,127.96 324.52,122.8 351.75,117.64" fill="none" stroke="#ED7D31" stroke-width="2.1" stroke-linejoin="round" stroke-linecap="round"/>
<polyline points="52.22,148.6 79.44,148.6 106.68,143.44 133.91,148.6 161.13,153.76 188.37,143.44 215.59,138.28 242.82,138.28 270.06,143.44 297.29,148.6 324.52,143.44 351.75,148.6" fill="none" stroke="#A5A5A5" stroke-width="2.1" stroke-linejoin="round" stroke-linecap="round"/>
<polyline points="52.22,158.92 79.44,153.76 106.68,158.92 133.91,164.08 161.13,164.08 188.37,158.92 215.59,148.6 242.82,143.44 270.06,153.76 297.29,158.92 324.52,158.92 351.75,138.28" fill="none" stroke="#FFC000" stroke-width="2.1" stroke-linejoin="round" stroke-linecap="round"/>
<line x1="71.1" x2="91.3" y1="211.4" y2="211.4" stroke="#4472C4" stroke-width="2.1" stroke-linecap="round"/>
<text x="94.0" y="214.4" font-size="8.6" letter-spacing="1.25" font-weight="400" fill="#595959">電気代</text>
<line x1="133.5" x2="153.7" y1="211.4" y2="211.4" stroke="#ED7D31" stroke-width="2.1" stroke-linecap="round"/>
<text x="156.4" y="214.4" font-size="8.6" letter-spacing="1.25" font-weight="400" fill="#595959">ガス代</text>
<line x1="196" x2="216.2" y1="211.4" y2="211.4" stroke="#A5A5A5" stroke-width="2.1" stroke-linecap="round"/>
<text x="218.9" y="214.4" font-size="8.6" letter-spacing="1.25" font-weight="400" fill="#595959">水道代</text>
<line x1="258.5" x2="278.7" y1="211.4" y2="211.4" stroke="#FFC000" stroke-width="2.1" stroke-linecap="round"/>
<text x="281.4" y="214.4" font-size="8.6" letter-spacing="1.25" font-weight="400" fill="#595959">その他</text>
</svg>
<div class="t" id="d0" style="transform:scaleX(0.952);left:221px;top:340px;font-size:12px;">折れ線グラフは、一定期間 (年、月、および日) における傾向を表示したり、順番が</div>
<div class="t" id="d1" style="transform:scaleX(0.929);left:221px;top:354px;font-size:12px;">重要な複数の項目を表示したりする際に使用します。データ要素が多数あり、順番</div>
<div class="t" id="d2" style="transform:scaleX(0.895);left:221px;top:369px;font-size:12px;">が重要な場合に、このグラフを使用します。</div>
<div class="btn" id="ok"></div>
<div class="t" id="okt" style="left:497px;top:573px;font-size:12.5px;font-family:'Liberation Sans',sans-serif;">OK</div>
<div class="btn" id="cancel"></div>
<div class="t" id="cant" style="transform:scaleX(0.88);left:565px;top:573px;font-size:12px;">キャンセル</div>
<svg class="ch" style="left:622px;top:588px" width="10" height="10" viewBox="0 0 10 10" fill="#b9b9b9"><rect x="7" y="1" width="2" height="2"/><rect x="4" y="4" width="2" height="2"/><rect x="7" y="4" width="2" height="2"/><rect x="1" y="7" width="2" height="2"/><rect x="4" y="7" width="2" height="2"/><rect x="7" y="7" width="2" height="2"/></svg>
<div class="red" id="red1"></div>
<div class="red" id="red2"></div>
<div class="abs" id="bt"></div><div class="abs" id="bl"></div><div class="abs" id="br"></div><div class="abs" id="bb"></div>
</body>
</html>
